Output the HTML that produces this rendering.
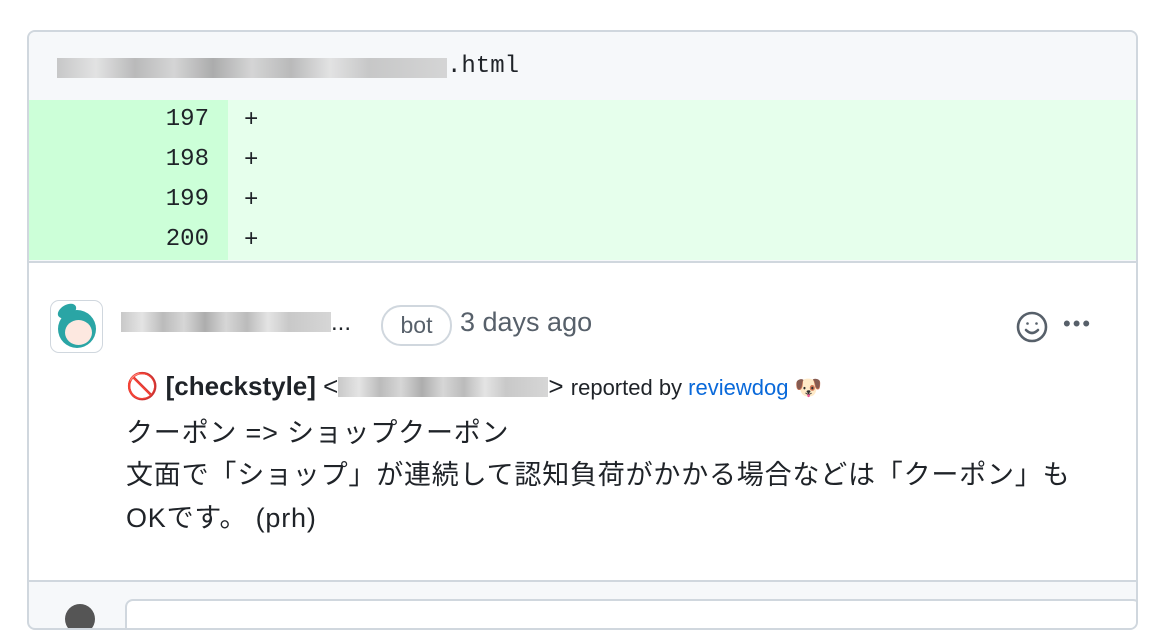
<!DOCTYPE html>
<html><head><meta charset="utf-8"><style>
*{margin:0;padding:0;box-sizing:border-box}
body{width:1162px;height:608px;background:#fff;position:relative;overflow:hidden;font-family:"Liberation Sans","Noto Sans CJK JP",sans-serif;color:#1f2328}
.box{position:absolute;left:27px;top:30px;width:1111px;height:600px;border:2px solid #d0d7de;border-radius:8px;overflow:hidden;background:#f6f8fa}
.hdr{position:absolute;left:0;top:0;width:100%;height:68px;background:#f6f8fa}
.mono{font-family:"Liberation Mono",monospace;font-size:24px}
.blur{background:linear-gradient(90deg,#bbb,#ddd 10%,#aaa 20%,#ccc 30%,#999 40%,#ccc 50%,#aaa 60%,#ddd 70%,#bbb 80%,#ccc 100%);opacity:.8}
.ab{position:absolute}
.row{position:absolute;left:0;width:100%;height:40px;background:#e6ffec}
.num{position:absolute;left:0;top:0;width:199px;height:40px;background:#ccffd8;text-align:right;padding-right:19px;line-height:40px}
.plus{position:absolute;left:215px;top:0;line-height:42px}
.cm{position:absolute;left:0;top:229px;width:100%;height:321px;background:#fff;border-top:2px solid #d0d7de;border-bottom:2px solid #d0d7de}
.t{position:absolute;white-space:nowrap}
.jp{font-size:27px;letter-spacing:0.8px}
</style></head><body>
<div class="box">
 <div class="hdr">
  <div class="blur ab" style="left:28px;top:26px;width:390px;height:20px"></div>
  <div class="t mono" style="left:418px;top:21px">.html</div>
 </div>
 <div class="row mono" style="top:68px"><div class="num">197</div><div class="plus">+</div></div>
 <div class="row mono" style="top:108px"><div class="num">198</div><div class="plus">+</div></div>
 <div class="row mono" style="top:148px"><div class="num">199</div><div class="plus">+</div></div>
 <div class="row mono" style="top:188px"><div class="num">200</div><div class="plus">+</div></div>
 <div class="cm">
  <div style="position:absolute;left:21px;top:37px;width:53px;height:53px;border:1px solid #d0d7de;border-radius:9px;background:#fff">
   <div style="position:absolute;left:7px;top:9px;width:38px;height:38px;border-radius:50%;background:#2aa5a5"></div>
   <div style="position:absolute;left:6px;top:4px;width:20px;height:12px;border-radius:50%;background:#2aa5a5;transform:rotate(-30deg)"></div>
   <div style="position:absolute;left:14px;top:19px;width:27px;height:25px;border-radius:50%;background:#fde8e0"></div>
  </div>
  <div class="blur ab" style="left:92px;top:49px;width:210px;height:20px"></div>
  <div class="t" style="left:302px;top:46px;font-size:24px;color:#1f2328">...</div>
  <div class="t" style="left:352px;top:42px;width:71px;height:41px;border:2px solid #d0d7de;border-radius:20px;text-align:center;line-height:37px;font-size:23px;color:#57606a">bot</div>
  <div class="t" style="left:431px;top:44px;font-size:27px;color:#57606a">3 days ago</div>
  <svg style="position:absolute;left:986px;top:47px" width="34" height="34" viewBox="0 0 34 34" fill="none" stroke="#57606a" stroke-width="2.6"><circle cx="17" cy="17" r="14"/><path d="M11 20q6 6 12 0" stroke-linecap="round"/><circle cx="12.5" cy="13.5" r="1.3" fill="#57606a" stroke="none"/><circle cx="21.5" cy="13.5" r="1.3" fill="#57606a" stroke="none"/></svg>
  <div class="t" style="left:1034px;top:48px;font-size:22px;color:#57606a;letter-spacing:2px">•••</div>
  <div class="t" style="left:97px;top:108px;font-size:26px">🚫 <b>[checkstyle]</b> &lt;<span class="blur" style="display:inline-block;width:210px;height:20px;vertical-align:-2px"></span>&gt; <span style="font-size:22px">reported by <span style="color:#0969da">reviewdog</span> 🐶</span></div>
  <div class="t jp" style="left:97px;top:148px">クーポン =&gt; ショップクーポン</div>
  <div class="t jp" style="left:97px;top:190px">文面で「ショップ」が連続して認知負荷がかかる場合などは「クーポン」も</div>
  <div class="t jp" style="left:97px;top:233px">OKです。 (prh)</div>
 </div>
 <div style="position:absolute;left:96px;top:567px;width:1016px;height:40px;background:#fff;border:2px solid #d0d7de;border-radius:8px"></div>
 <div style="position:absolute;left:36px;top:572px;width:30px;height:30px;border-radius:50%;background:#555"></div>
</div>
</body></html>
